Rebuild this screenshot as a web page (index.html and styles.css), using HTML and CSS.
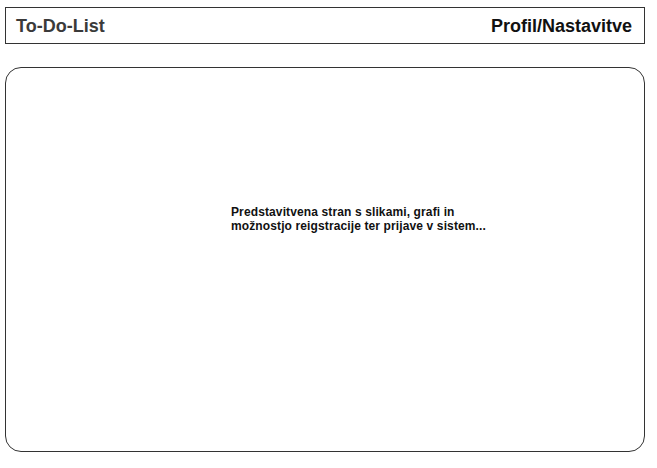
FILE: index.html
```html
<!DOCTYPE html>
<html>
<head>
<meta charset="utf-8">
<link rel="stylesheet" href="styles.css">
</head>
<body>
<header class="topbar">
  <span class="brand">To-Do-List</span>
  <span class="profile">Profil/Nastavitve</span>
</header>
<main class="panel">
  <p class="note">Predstavitvena stran s slikami, grafi in<br>možnostjo reigstracije ter prijave v sistem...</p>
</main>
</body>
</html>
```

FILE: styles.css
```css
html, body {
  margin: 0;
  padding: 0;
  background: #ffffff;
}
body {
  font-family: "Liberation Sans", Arial, sans-serif;
  width: 657px;
  height: 468px;
  overflow: hidden;
}
.topbar {
  box-sizing: border-box;
  margin: 7px 0 0 5px;
  width: 640px;
  height: 37px;
  border: 1px solid #333333;
  display: flex;
  align-items: center;
  justify-content: space-between;
  padding: 1px 12px 0 10px;
  font-weight: bold;
  font-size: 18px;
}
.brand {
  color: #3a3a3a;
}
.profile {
  color: #111111;
}
.panel {
  box-sizing: border-box;
  margin: 23px 0 0 5px;
  width: 640px;
  height: 385px;
  border: 1px solid #333333;
  border-radius: 16px;
  padding: 137px 0 0 225px;
}
.note {
  margin: 0;
  font-size: 12px;
  line-height: 14px;
  font-weight: bold;
  letter-spacing: 0.12px;
  color: #111111;
}
```
